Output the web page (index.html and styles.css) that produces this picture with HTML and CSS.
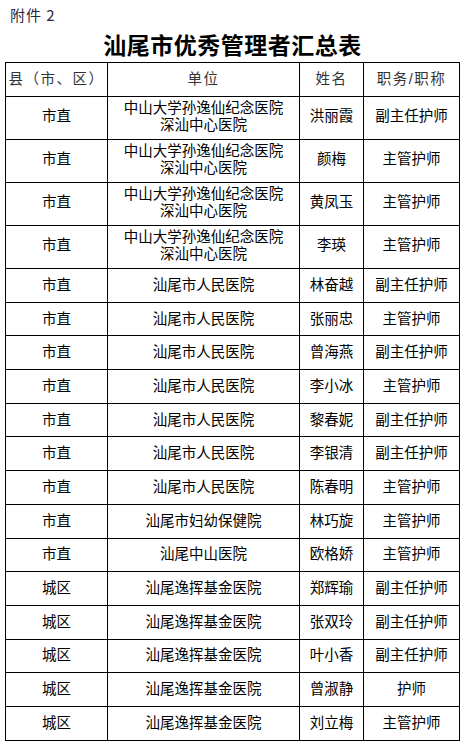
FILE: index.html
```html
<!DOCTYPE html>
<html lang="zh-CN">
<head>
<meta charset="utf-8">
<title>汕尾市优秀管理者汇总表</title>
<link rel="stylesheet" href="styles.css">
</head>
<body>
<div class="page">
  <div class="attach">附件 2</div>
  <h1 class="title">汕尾市优秀管理者汇总表</h1>
  <table class="list">
    <colgroup>
      <col class="c1"><col class="c2"><col class="c3"><col class="c4">
    </colgroup>
    <thead>
      <tr><th>县（市、区）</th><th>单位</th><th>姓名</th><th>职务/职称</th></tr>
    </thead>
    <tbody>
      <tr class="tall"><td>市直</td><td><span class="ln">中山大学孙逸仙纪念医院</span><span class="ln">深汕中心医院</span></td><td>洪丽霞</td><td>副主任护师</td></tr>
      <tr class="tall"><td>市直</td><td><span class="ln">中山大学孙逸仙纪念医院</span><span class="ln">深汕中心医院</span></td><td>颜梅</td><td>主管护师</td></tr>
      <tr class="tall"><td>市直</td><td><span class="ln">中山大学孙逸仙纪念医院</span><span class="ln">深汕中心医院</span></td><td>黄凤玉</td><td>主管护师</td></tr>
      <tr class="tall"><td>市直</td><td><span class="ln">中山大学孙逸仙纪念医院</span><span class="ln">深汕中心医院</span></td><td>李瑛</td><td>主管护师</td></tr>
      <tr><td>市直</td><td>汕尾市人民医院</td><td>林奋越</td><td>副主任护师</td></tr>
      <tr><td>市直</td><td>汕尾市人民医院</td><td>张丽忠</td><td>主管护师</td></tr>
      <tr><td>市直</td><td>汕尾市人民医院</td><td>曾海燕</td><td>副主任护师</td></tr>
      <tr><td>市直</td><td>汕尾市人民医院</td><td>李小冰</td><td>主管护师</td></tr>
      <tr><td>市直</td><td>汕尾市人民医院</td><td>黎春妮</td><td>副主任护师</td></tr>
      <tr><td>市直</td><td>汕尾市人民医院</td><td>李银清</td><td>副主任护师</td></tr>
      <tr><td>市直</td><td>汕尾市人民医院</td><td>陈春明</td><td>主管护师</td></tr>
      <tr><td>市直</td><td>汕尾市妇幼保健院</td><td>林巧旋</td><td>主管护师</td></tr>
      <tr><td>市直</td><td>汕尾中山医院</td><td>欧格娇</td><td>主管护师</td></tr>
      <tr><td>城区</td><td>汕尾逸挥基金医院</td><td>郑辉瑜</td><td>副主任护师</td></tr>
      <tr><td>城区</td><td>汕尾逸挥基金医院</td><td>张双玲</td><td>副主任护师</td></tr>
      <tr><td>城区</td><td>汕尾逸挥基金医院</td><td>叶小香</td><td>副主任护师</td></tr>
      <tr><td>城区</td><td>汕尾逸挥基金医院</td><td>曾淑静</td><td>护师</td></tr>
      <tr><td>城区</td><td>汕尾逸挥基金医院</td><td>刘立梅</td><td>主管护师</td></tr>
    </tbody>
  </table>
</div>
</body>
</html>
```
FILE: styles.css
```css
html, body {
  margin: 0;
  padding: 0;
  background: #ffffff;
}
.page {
  padding: 0 0 0 5px;
  font-family: "Noto Sans CJK SC", "DejaVu Sans", sans-serif;
  color: #000;
}
.attach {
  height: 30px;
  padding: 5px 0 0 5px;
  box-sizing: border-box;
  font-size: 15px;
  line-height: 20px;
  color: #2a2540;
  letter-spacing: 1px;
}
.title {
  margin: 0;
  height: 32px;
  width: 455px;
  text-align: center;
  font-size: 23px;
  line-height: 28px;
  font-weight: 700;
  letter-spacing: 0.5px;
}
.list {
  border-collapse: collapse;
  table-layout: fixed;
  width: 455px;
}
.c1 { width: 102px; }
.c2 { width: 192px; }
.c3 { width: 64px; }
.c4 { width: 96px; }
.list th,
.list td {
  border: 1px solid #000;
  padding: 0;
  text-align: center;
  vertical-align: middle;
  font-family: "Liberation Sans", "Noto Sans CJK SC", sans-serif;
  font-size: 14.5px;
  line-height: 17px;
  font-weight: 400;
  white-space: nowrap;
  overflow: hidden;
}
.list th {
  height: 33px;
  color: #333;
  letter-spacing: 1.5px;
}
.list td {
  height: 32.7px;
}
.list tr.tall td {
  height: 35px;
  padding: 2px 0 5px;
}
.ln {
  display: block;
  height: 17px;
  line-height: 17px;
}
```
